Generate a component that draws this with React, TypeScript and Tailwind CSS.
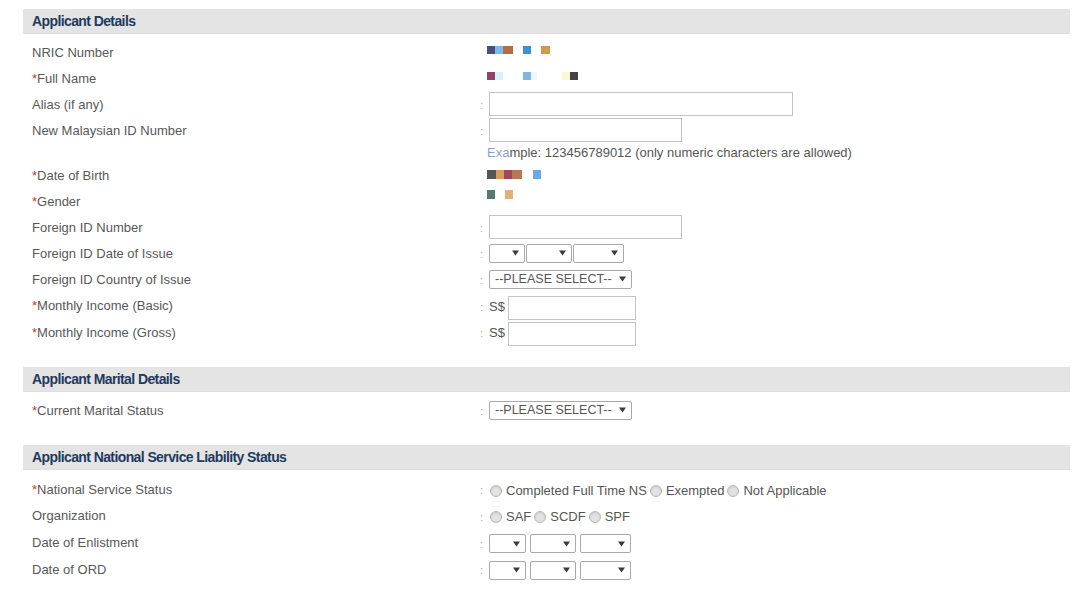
import React from 'react';

type Block = [number, number, string];

const Pixels: React.FC<{ blocks: Block[]; h?: number; className?: string }> = ({ blocks, h = 8, className }) => {
  const w = Math.max(...blocks.map(([x, bw]) => x + bw));
  return (
    <svg width={w} height={h} className={className}>
      {blocks.map(([x, bw, c], i) => (
        <rect key={i} x={x} y={0} width={bw} height={h} fill={c} />
      ))}
    </svg>
  );
};

const Arrow = () => (
  <svg width="7" height="6" viewBox="0 0 7 6">
    <path d="M0 0.5 H7 L3.5 5.5 Z" fill="#3a3a3a" />
  </svg>
);

const Select: React.FC<{ w: string; text?: string }> = ({ w, text }) => (
  <div
    className={`${w} h-[19px] border border-[#a9a9a9] rounded-[2px] bg-white flex items-center justify-between pl-[5px] pr-[5px] text-[12.5px] text-[#555]`}
  >
    <span className="leading-none">{text}</span>
    <Arrow />
  </div>
);

const Radio: React.FC<{ label: string }> = ({ label }) => (
  <span className="flex items-center">
    <span className="w-[12px] h-[12px] rounded-full border border-[#b8b8b8] bg-[#e2e2e2] shadow-[inset_0_1px_2px_rgba(0,0,0,0.12)] mr-[4px] ml-[1px]" />
    <span>{label}</span>
  </span>
);

const Header: React.FC<{ title: string; className?: string }> = ({ title, className }) => (
  <div
    className={`h-[25px] bg-[#e4e4e4] border-b border-[#dedede] flex items-center pl-[9px] text-[14px] font-bold text-[#1e3a5f] tracking-[-0.6px] ${className ?? ''}`}
  >
    {title}
  </div>
);

const Row: React.FC<{
  label: string;
  req?: boolean;
  colon?: boolean;
  h?: string;
  children?: React.ReactNode;
}> = ({ label, req, colon = true, h = 'h-[26px]', children }) => (
  <div className={`flex items-center ${h}`}>
    <div className="w-[457px] pl-[9px] pt-[1px] text-[13px] text-[#585858]">
      {req && <span className="text-[#c0392b]">*</span>}
      {label}
    </div>
    <div className="w-[9px] text-[11px] text-[#aaa] pt-[3px]">{colon ? ':' : ''}</div>
    <div className="flex items-center text-[13px] text-[#555]">{children}</div>
  </div>
);

const Input: React.FC<{ w: string }> = ({ w }) => (
  <div className={`${w} h-[24px] border border-[#c4c4c4] bg-white`} />
);

export default function App() {
  return (
    <div className="w-[1080px] h-[600px] bg-white overflow-hidden font-['Liberation_Sans',Arial,sans-serif]">
      <div className="ml-[23px] w-[1047px] pt-[9px]">
        <Header title="Applicant Details" />
        <div className="mt-[5px]">
          <Row label="NRIC Number" colon={false}>
            <Pixels
              className="-ml-[2px] -mt-[4px]"
              blocks={[
                [0, 8, '#4a4f7a'],
                [8, 8, '#80b8ea'],
                [16, 10, '#b06e45'],
                [36, 8, '#3d8fd6'],
                [54, 9, '#d09a4e'],
              ]}
            />
          </Row>
          <Row label="Full Name" req colon={false}>
            <Pixels
              className="-ml-[2px] -mt-[4px]"
              blocks={[
                [0, 8, '#8e4468'],
                [8, 8, '#d6f3fb'],
                [36, 8, '#7fb6e8'],
                [44, 6, '#eef9fb'],
                [75, 8, '#fbf7d9'],
                [83, 8, '#444444'],
              ]}
            />
          </Row>
          <Row label="Alias (if any)">
            <Input w="w-[304px]" />
          </Row>
          <Row label="New Malaysian ID Number">
            <Input w="w-[193px]" />
          </Row>
          <Row label="" colon={false} h="h-[20px]">
            <span className="-ml-[2px] text-[13px] text-[#555]">
              <span className="text-[#8aa2c8]">Exa</span>mple: 123456789012 (only numeric characters are allowed)
            </span>
          </Row>
          <Row label="Date of Birth" req colon={false} h="h-[25px]">
            <Pixels
              className="-ml-[2px] -mt-[2px]"
              h={9}
              blocks={[
                [0, 9, '#555555'],
                [9, 8, '#d4a058'],
                [17, 8, '#9a4a5a'],
                [25, 10, '#b8794f'],
                [46, 8, '#6aaae8'],
              ]}
            />
          </Row>
          <Row label="Gender" req colon={false}>
            <Pixels
              className="-ml-[2px] -mt-[14px]"
              h={9}
              blocks={[
                [0, 8, '#557a70'],
                [18, 8, '#e0b27a'],
              ]}
            />
          </Row>
          <Row label="Foreign ID Number">
            <Input w="w-[193px]" />
          </Row>
          <Row label="Foreign ID Date of Issue">
            <div className="flex gap-[1px]">
              <Select w="w-[36px]" />
              <Select w="w-[46px]" />
              <Select w="w-[51px]" />
            </div>
          </Row>
          <Row label="Foreign ID Country of Issue">
            <Select w="w-[143px]" text="--PLEASE SELECT--" />
          </Row>
          <Row label="Monthly Income (Basic)" req h="h-[27px]">
            <span className="mr-[3px] mt-[2px]">S$</span>
            <div className="mt-[4px]">
              <Input w="w-[128px]" />
            </div>
          </Row>
          <Row label="Monthly Income (Gross)" req>
            <span className="mr-[3px] mt-[2px]">S$</span>
            <div className="mt-[4px]">
              <Input w="w-[128px]" />
            </div>
          </Row>
        </div>

        <Header title="Applicant Marital Details" className="mt-[22px]" />
        <div className="mt-[5px]">
          <Row label="Current Marital Status" req>
            <Select w="w-[143px]" text="--PLEASE SELECT--" />
          </Row>
        </div>

        <Header title="Applicant National Service Liability Status" className="mt-[22px]" />
        <div className="mt-[6px]">
          <Row label="National Service Status" req>
            <div className="flex items-center gap-[2px] mt-[3px]">
              <Radio label="Completed Full Time NS" />
              <Radio label="Exempted" />
              <Radio label="Not Applicable" />
            </div>
          </Row>
          <Row label="Organization" h="h-[27px]">
            <div className="flex items-center gap-[2px] mt-[3px]">
              <Radio label="SAF" />
              <Radio label="SCDF" />
              <Radio label="SPF" />
            </div>
          </Row>
          <Row label="Date of Enlistment" h="h-[27px]">
            <div className="flex gap-[4px] mt-[2px]">
              <Select w="w-[37px]" />
              <Select w="w-[46px]" />
              <Select w="w-[51px]" />
            </div>
          </Row>
          <Row label="Date of ORD">
            <div className="flex gap-[4px] mt-[2px]">
              <Select w="w-[37px]" />
              <Select w="w-[46px]" />
              <Select w="w-[51px]" />
            </div>
          </Row>
        </div>
      </div>
    </div>
  );
}
